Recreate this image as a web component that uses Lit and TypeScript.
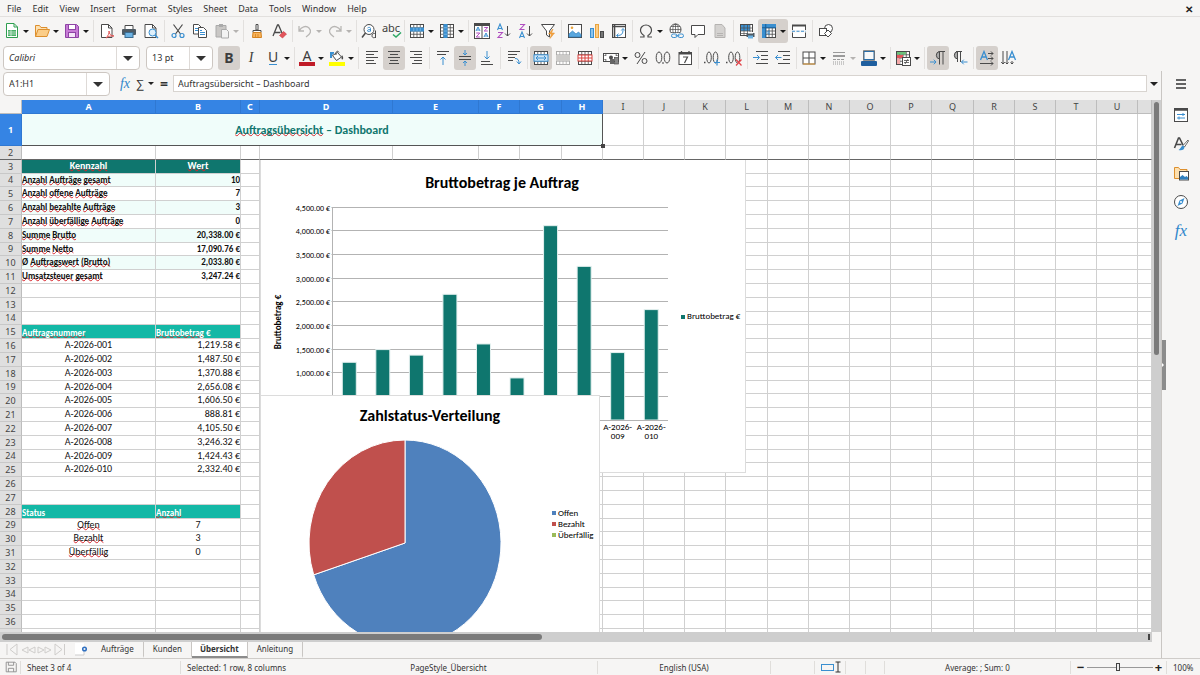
import { LitElement, html, svg, css, nothing, TemplateResult, SVGTemplateResult } from "lit";
import { customElement, property } from "lit/decorators.js";
import { classMap } from "lit/directives/class-map.js";

const K = "#4a4a4a";
const B = "#3a8fd0";
const G = "#9a9a9a";
const O = "#e8a33d";

const lines = (rows: [number, number, number][], color = K) =>
  svg`${rows.map(([x1, x2, y]) => svg`<path d="M${x1} ${y}H${x2}" stroke=${color}/>`)}`;

const grid = (color = K) => svg`
  <rect x="1.5" y="1.5" width="13" height="13" fill="#fff" stroke=${color}/>
  <path d="M1.5 4.75h13M1.5 8h13M1.5 11.25h13M4.75 1.5v13M8 1.5v13M11.25 1.5v13" stroke=${color} stroke-width=".8"/>`;

const icons: Record<string, SVGTemplateResult> = {
  new: svg`<path d="M2.500 .5h7.500l3.500 3.500V14.500H2.500z" fill="#fff" stroke="#2f9e4f"/><path d="M10 .5V4h3.500" stroke="#2f9e4f"/><rect x="4" y="7" width="8" height="6" fill="#49b067"/><path d="M4 9h8M4 11h8M7 7v6" stroke="#fff" stroke-width=".6"/>`,
  open: svg`<path d="M1.500 13.500V2.500h4l1.500 2h6v2" fill="#fde0b0" stroke="#dd8f2d"/><path d="M1.500 13.500L4 6.500h11.500l-2.500 7z" fill="#fbcd88" stroke="#dd8f2d"/>`,
  save: svg`<path d="M1.500 1.500h11l2 2v11h-13z" fill="#c77bd6" stroke="#8e44a5"/><rect x="4.500" y="1.500" width="7" height="5" fill="#fff" stroke="#8e44a5"/><rect x="4.500" y="9.500" width="7" height="5" fill="#f5e6f8" stroke="#8e44a5"/>`,
  pdf: svg`<path d="M2.500 1.500h7L13 5v9.500H2.500z" fill="#fff" stroke=${K}/><path d="M9.500 1.500V5H13" stroke=${K}/><path d="M7 15c2-2 3.500-5 3-7 0 3 2 5 5 5-3-.5-6 .5-8 2z" fill="#fff" stroke="#e05555"/>`,
  print: svg`<path d="M4 6V2.500h8V6" fill="#fff" stroke=${K}/><rect x="1" y="6" width="14" height="6" rx="1" fill="#4e5a63"/><rect x="4" y="9.500" width="8" height="5" fill="#6db3e4" stroke="#3b6c90"/>`,
  preview: svg`<path d="M2 1.500h7.500L13 5v9.500H2z" fill="#fff" stroke=${K}/><path d="M9.500 1.500V5H13" stroke=${K}/><circle cx="9.500" cy="9.500" r="3.500" fill="#dff0fb" stroke=${B}/><path d="M12 12l3 3" stroke=${B} stroke-width="1.500"/>`,
  cut: svg`<path d="M3.500 1.500l7 9.500M12.500 1.500l-7 9.500" stroke=${K} stroke-width="1.200"/><circle cx="4" cy="12.500" r="2" stroke=${B} stroke-width="1.200"/><circle cx="12" cy="12.500" r="2" stroke=${B} stroke-width="1.200"/>`,
  copy: svg`<path d="M1.500 1.500h5l3 3v6.500h-8z" fill="#fff" stroke=${K}/><path d="M3 5.500h4M3 7.500h4" stroke=${B}/><path d="M6.500 4.500h5l3 3v7h-8z" fill="#fff" stroke=${K}/><path d="M8 9.500h5M8 11.500h5M8 7.500h2" stroke=${B}/>`,
  paste: svg`<path d="M2 2.500h10V14H2z" fill="#c9c7c5" stroke="#aaa"/><rect x="5" y="1" width="4" height="3" fill="#aaa"/><path d="M7.500 6.500h5l2 2v6.500h-7z" fill="#f3f3f3" stroke="#aaa"/>`,
  clone: svg`<path d="M7 1.500h2V7H7z" fill="#fff" stroke=${K}/><path d="M4 7.500h8v2H4z" fill="#fff" stroke=${K}/><path d="M4 9.500h8l.5 5h-9z" fill="#f8b45c" stroke="#d58320"/><path d="M6.500 11v3.500M9 11v3.500" stroke="#d58320" stroke-width=".8"/>`,
  clear: svg`<path d="M2 13L6.500 2h1L11 10M3.500 9.500h6" stroke=${K} stroke-width="1.300"/><path d="M8.500 12.500l4-4 3 2.500-4 4z" fill="#e2545b" stroke="#c9353d" stroke-width=".6"/>`,
  undo: svg`<path d="M2 3v5h5M2.500 7.500C4 4 9 2 12 5s1.500 6-3 9" stroke="#b8b6b4" stroke-width="1.300"/>`,
  redo: svg`<path d="M14 3v5H9M13.500 7.500C12 4 7 2 4 5s-1.500 6 3 9" stroke="#b8b6b4" stroke-width="1.300"/>`,
  find: svg`<circle cx="8" cy="6.500" r="5" fill="#fff" stroke=${K}/><path d="M4.500 10L1 14.500" stroke=${K} stroke-width="1.500"/><path d="M6.500 5c1-1 3-.8 3 .5v3M9.500 6.500c-2 0-3 .3-3 1.300s2 1 3-.3" stroke=${B}/><path d="M14.500 7.500V15M14.500 11c-1-1-3.500-.8-3.500 1.700s2.500 2.300 3.500 1.300" stroke=${K}/>`,
  rowop: svg`${grid()}<rect x="1" y="4.500" width="14" height="4" fill=${B}/><path d="M4.750 4.500v4M8 4.500v4M11.250 4.500v4" stroke="#8cc4ec" stroke-width=".7"/>`,
  colop: svg`${grid()}<rect x="4.500" y="1" width="4" height="14" fill=${B}/><path d="M4.500 4.750h4M4.500 8h4M4.500 11.250h4" stroke="#8cc4ec" stroke-width=".7"/>`,
  sort: svg`<rect x=".5" y=".5" width="15" height="15" fill="#fff" stroke=${K}/><path d="M.5 2h15" stroke=${K} stroke-width="2"/><path d="M8 1v15" stroke=${K}/><path d="M2 8l2-4 2 4M2.800 7h2.400" stroke=${B}/><path d="M2.200 10h3.600l-3.600 4h3.600" stroke="#b04fc0"/><path d="M10.200 4.500h3.600l-3.600 3.500h3.600" stroke="#b04fc0"/><path d="M10 14l2-4 2 4M10.800 13h2.400" stroke=${B}/>`,
  asc: svg`<path d="M1.500 7L4 1l2.500 6M2.300 5.500h3.400" stroke=${B} stroke-width="1.100"/><path d="M2 9.500h4.500L2 14.500h4.500" stroke="#b04fc0" stroke-width="1.100"/><path d="M11.500 3v10M9 10.500l2.500 2.500 2.500-2.500" stroke=${K}/>`,
  desc: svg`<path d="M2 1.500h4.500L2 6.500h4.500" stroke="#b04fc0" stroke-width="1.100"/><path d="M1.500 15L4 9l2.500 6M2.300 13.500h3.400" stroke=${B} stroke-width="1.100"/><path d="M11.500 3v10M9 10.500l2.500 2.500 2.500-2.500" stroke=${K}/>`,
  filter: svg`<path d="M1.500 1.500h13L9.500 8v6l-3-2V8z" fill="#fff" stroke=${K}/><path d="M13 6l-4.500 5h3L10 15.500l4.500-5.500h-3z" fill="#f7a543" stroke="#e08a22" stroke-width=".5"/>`,
  image: svg`<rect x="1.500" y="1.500" width="13" height="13" fill="#fff" stroke=${K}/><path d="M2 14v-3l3.500-3L9 11l2.500-2L14 11.500V14z" fill="#5aa7de" stroke="#2f7fbf" stroke-width=".7"/><circle cx="5" cy="4.800" r="1.300" fill=${O}/>`,
  chart: svg`<rect x="1.500" y="5.500" width="3" height="9" fill="#8cc4ec" stroke=${B}/><rect x="6.500" y="1.500" width="3" height="13" fill="#fbcd88" stroke=${O}/><rect x="11.500" y="8.500" width="3" height="6" fill="#777" stroke=${K}/>`,
  pivot: svg`<rect x="1.500" y="1.500" width="13" height="13" fill="#fff" stroke=${K}/><path d="M1.500 3.500h13M3.500 1.500v13" stroke=${K} stroke-width="1.600"/><path d="M6 12.500c5 0 6-2 6-6M10.300 7.500L12 5.500l1.700 2M7.500 10.700l-2 1.800 2 1.700" stroke=${B}/>`,
  omega: svg`<path d="M2 14h4v-1.500C3.500 11 2.500 9 2.500 7a5.500 5 0 0 1 11 0c0 2-1 4-3.500 5.500V14h4" stroke=${K} stroke-width="1.200"/>`,
  link: svg`<circle cx="7.500" cy="6.500" r="5.500" fill="#fff" stroke=${K}/><path d="M2 6.500h11M7.500 1v11M3 3.500h9M3 9.500h9" stroke=${K} stroke-width=".7"/><ellipse cx="7.500" cy="6.500" rx="2.700" ry="5.500" stroke=${K} stroke-width=".7"/><rect x="3" y="10" width="13" height="5.500" fill="#f6f5f4"/><rect x="3.500" y="11" width="5.500" height="3.500" rx="1.700" stroke=${B}/><rect x="10" y="11" width="5.500" height="3.500" rx="1.700" stroke=${B}/><path d="M7.500 12.750h4" stroke=${B}/>`,
  comment: svg`<path d="M1.500 2.500h13v9H8L5 14.500v-3H1.500z" fill="#fff" stroke=${K}/>`,
  page: svg`<path d="M3 1.500h7L13 5v9.500H3z" fill="#d4d2d0" stroke="#b5b3b1"/><path d="M5 10.500h6M5 12.500h6" stroke="#b5b3b1"/>`,
  printarea: svg`<rect x="1.500" y="1.500" width="12" height="11" fill="#fff" stroke=${K}/><rect x="2" y="2" width="9" height="6" fill=${B}/><path d="M1.500 5h12M1.500 8h12M1.500 10.500h12M5 1.500v11M8.500 1.500v11M11 1.500v11" stroke=${K} stroke-width=".7"/><rect x="7.500" y="10" width="8" height="4" fill="#4e5a63"/><rect x="9" y="9" width="5" height="1.500" fill="#fff"/><rect x="9" y="12.500" width="5" height="3" fill="#6db3e4"/>`,
  freeze: svg`${grid()}<rect x="1" y="1" width="14" height="4" fill=${B}/><rect x="1" y="1" width="4" height="14" fill=${B}/><path d="M4.750 1v14M1 4.750h14" stroke="#1d5d93"/><path d="M8 7.500l-2 2 2 2M8 7.500v4" stroke=${B}/>`,
  split: svg`<path d="M1.500 7V2.500h13V7M1.500 9.500v5h13v-5" fill="#fff" stroke=${K}/><path d="M1 2.500h14" stroke=${K} stroke-width="2"/><path d="M1 8.250h14" stroke=${B} stroke-dasharray="3 1.500"/>`,
  shapes: svg`<circle cx="10.500" cy="5.500" r="4" fill="#fff" stroke=${K}/><rect x="1.500" y="5.500" width="7" height="7" fill="#fff" stroke=${K}/><path d="M10 7l3.500 3.500L10 14l-3.500-3.500z" fill="#fff" stroke=${K}/>`,
  left: lines([[2, 14, 1.5], [2, 10, 4.5], [2, 14, 7.5], [2, 10, 10.5], [2, 12, 13.5]]),
  center: lines([[2, 14, 1.5], [4, 12, 4.5], [2, 14, 7.5], [4, 12, 10.5], [3, 13, 13.5]]),
  right: lines([[2, 14, 1.5], [6, 14, 4.5], [2, 14, 7.5], [6, 14, 10.5], [4, 14, 13.5]]),
  top: svg`${lines([[2, 14, 1.5], [2, 11, 4.5]])}<path d="M8 15V7M5.500 9.500L8 7l2.500 2.500" stroke=${B}/>`,
  middle: svg`${lines([[2, 14, 6.5], [2, 14, 9.5]])}<path d="M8 0v5M6 3l2 2 2-2M8 16v-5M6 13l2-2 2 2" stroke=${B}/>`,
  bottom: svg`${lines([[2, 11, 11.5], [2, 14, 14.5]])}<path d="M8 1v8M5.500 6.500L8 9l2.500-2.500" stroke=${B}/>`,
  wrap: svg`${lines([[2, 14, 1.5], [2, 11, 4.5], [2, 9, 7.5], [2, 7, 10.5]])}<path d="M9 8.500c3 0 4 1.500 4 5M10.800 11.500L13 14l2-2.500" stroke=${B}/>`,
  merge: svg`${grid()}<rect x="1" y="4.800" width="14" height="6.400" fill="#cfe6f7" stroke=${B}/><path d="M3 8h10M5 6L3 8l2 2M11 6l2 2-2 2" stroke=${B}/>`,
  mergeoff: svg`<g opacity=".8">${grid(G)}<rect x="1" y="5" width="14" height="6" fill="#c4c2c0"/></g>`,
  unmerge: svg`${grid()}<rect x="1" y="5" width="14" height="6" fill="#fff" stroke="#d9433f"/><path d="M4.750 5v6M8 5v6M11.250 5v6M1 8h14" stroke="#d9433f"/>`,
  currency: svg`<rect x=".5" y="3.500" width="15" height="8" fill="#fff" stroke=${K}/><path d="M2 6V5h1.500M2 9v1h1.500M14 6V5h-1.500" stroke=${K}/><circle cx="8" cy="7.500" r="2" fill=${K}/><rect x="7" y="9" width="4" height="5" fill="#666"/><rect x="11.500" y="7.500" width="4" height="6.500" fill="#888" stroke=${K} stroke-width=".7"/>`,
  date: svg`<rect x="2" y="2.500" width="12.500" height="12" fill="#fff" stroke=${K}/><path d="M2 3.500h12.500" stroke=${K} stroke-width="2"/><path d="M4.500 1v2M12 1v2" stroke=${K} stroke-width="1.300"/><path d="M6 7h4.500L7.500 13" stroke=${K} stroke-width="1.200"/>`,
  adddec: svg`<ellipse cx="5" cy="7.500" rx="2.300" ry="5.500" stroke=${K}/><ellipse cx="11.500" cy="7.500" rx="2.300" ry="5.500" stroke=${K}/><path d="M0 12.500h1.500" stroke=${K} stroke-width="1.500"/><path d="M13 9.500v6M10 12.500h6" stroke=${B} stroke-width="1.200"/>`,
  deldec: svg`<ellipse cx="5" cy="7.500" rx="2.300" ry="5.500" stroke=${K}/><ellipse cx="11.500" cy="7.500" rx="2.300" ry="5.500" stroke=${K}/><path d="M0 12.500h1.500" stroke=${K} stroke-width="1.500"/><path d="M10 9.500l5.500 6M15.500 9.500l-5.500 6" stroke="#e2454b" stroke-width="1.200"/>`,
  number: svg`<ellipse cx="4" cy="7.500" rx="2.800" ry="5.500" stroke=${K}/><ellipse cx="12" cy="7.500" rx="2.800" ry="5.500" stroke=${K}/><path d="M7.300 13h1.400" stroke=${K} stroke-width="1.500"/>`,
  percent: svg`<circle cx="4.500" cy="5" r="2.500" stroke=${K}/><circle cx="11.500" cy="11" r="2.500" stroke=${K}/><path d="M12 2L4 14" stroke=${K}/>`,
  indent: svg`${lines([[3, 15, 1.5], [8, 15, 5.5], [8, 15, 9.5], [3, 15, 13.5]])}<path d="M0 7.500h6M4 5l2.500 2.500L4 10" stroke=${B}/>`,
  outdent: svg`${lines([[3, 15, 1.5], [8, 15, 5.5], [8, 15, 9.5], [3, 15, 13.5]])}<path d="M.5 7.500H6.500M3 5L.5 7.500 3 10" stroke=${B}/>`,
  borders: svg`<rect x="2" y="2" width="12" height="12" fill="#fff" stroke=${K}/><path d="M8 2v12M2 8h12" stroke=${K}/><path d="M2 14h12" stroke=${O}/>`,
  bstyle: svg`<path d="M2 2.500h12" stroke=${G} stroke-width="1"/><path d="M2 6h12" stroke=${G} stroke-width="2"/><path d="M2 9.500h12" stroke=${G} stroke-dasharray="3 1"/><path d="M2 12h12M2 14h12" stroke=${G} stroke-dasharray="1 1"/>`,
  bcolor: svg`<rect x="3" y="1.500" width="10" height="8" fill="#f8f8f8" stroke="#2a6ea8"/><path d="M2.500 .5h11v10h-11z" stroke=${K} stroke-width=".6"/><rect x="0" y="11" width="16" height="5" rx="1" fill="#1f5f9f"/>`,
  cond: svg`${grid()}<rect x="2" y="2" width="9" height="2.500" fill="#6cc17a"/><rect x="2" y="5" width="6" height="3" fill="#e2545b"/><rect x="2" y="8.500" width="3" height="5.500" fill="#f5a9a9"/><rect x="7.500" y="7.500" width="8" height="8" fill="#fff" stroke=${K}/><path d="M9 10.500h5M9 12.500h5M13 9l-3 5" stroke=${K} stroke-width=".8"/>`,
  ltr: svg`<path d="M13 1.500V14.500M9.500 1.500V14.500M15 1.500H8.500" stroke=${K}/><path d="M9.500 1.500a3.800 3.800 0 0 0 0 7.500z" fill="#aaa" stroke=${K}/><path d="M0 12h6M3.800 9.700L6 12l-2.200 2.300" stroke=${B}/>`,
  rtl: svg`<path d="M8.500 1.500V12M5.500 1.500V12M10 1.500H4" stroke=${K}/><path d="M5.500 1.500a3.800 3.800 0 0 0 0 7.500z" fill="#aaa" stroke=${K}/><path d="M15.500 12h-6M11.700 9.700L9.500 12l2.200 2.300" stroke=${B}/>`,
  tdir: svg`<path d="M1.500 10L5 1.500 8.500 10M2.700 7h4.600" stroke=${B} stroke-width="1.300"/><path d="M9 3.500h5M12 1.500l2 2-2 2M9 8.500h5M12 6.500l2 2-2 2M1 13.500h13M12 11.500l2 2-2 2" stroke=${K}/>`,
  tvert: svg`<path d="M7.500 10L11 1.500 14.500 10M8.700 7h4.600" stroke=${B} stroke-width="1.300"/><path d="M2 1v13M.2 12L2 14l1.800-2M6 1v13M4.500 12.500L6 14l1.500-1.500M11 11v3M9.500 12.500L11 14l1.500-1.500" stroke=${K}/>`,
  menu: svg`<path d="M3 4h10M3 8h10M3 12h10" stroke="#333" stroke-width="1.600"/>`,
  props: svg`<rect x="1.500" y="1.500" width="13" height="13" fill="#fff" stroke=${K}/><path d="M1 2.500h14" stroke=${K} stroke-width="2.500"/><path d="M4 7.500h8M10 6v3M4 11h8M6 9.500v3" stroke=${B}/>`,
  styles: svg`<path d="M1.500 12L5.500 2h1L10 9M3 8.500h5.500" stroke=${K} stroke-width="1.600"/><path d="M15 4l-5 5.500 1.500 1.500L15.500 5z" fill="#fff" stroke=${K} stroke-width=".8"/><path d="M10 9.500c-2 .5-2 3-4.500 4.500 3.500 1 6-.5 6-3z" fill=${B}/>`,
  gallery: svg`<path d="M1.500 13.500V2.500h4l1.500 2h7v9z" fill="#fde0b0" stroke="#dd8f2d"/><rect x="6.500" y="6.500" width="9" height="8.500" fill="#fff" stroke=${K}/><path d="M7 14.500v-2.500l2.500-2 2.500 2 1.500-1L15 12.500v2z" fill="#2f7fbf"/>`,
  navigator: svg`<circle cx="8" cy="8" r="6.500" fill="#fff" stroke=${K}/><path d="M11.500 4L9.500 9.500 4.500 12l2-5.500z" fill=${B}/><circle cx="8" cy="8" r="1" fill="#fff"/>`,
  floppy: svg`<path d="M2.500 2.500h10l1.500 1.500v9.500H2.500z" stroke="#8a8a8a"/><path d="M5 2.500v3.500h6V2.500M5 13.500V9.500h6v4" stroke="#8a8a8a"/>`,
  bucket: svg`<path d="M3.500 5.500l5-3 4 4.500-5 3.500z" fill="#fff" stroke=${K}/><path d="M7 5c-1-3.500 2-5 3-2.500" stroke=${K}/><path d="M13 5c1.500 2 1.500 4 .5 4.500s-1.500-2-.5-4.500z" fill=${K}/><path d="M1 2h4v1.500L3 5v3H1z" fill="#3a8fd0"/><rect x="0" y="12" width="16" height="4" fill="#ffff00"/>`,
};

@customElement("ui-icon")
export class UiIcon extends LitElement {
  static styles = css`
    :host { display: block; width: 16px; height: 16px; }
    svg { display: block; width: 100%; height: 100%; }
  `;
  @property() name = "";
  render() {
    return html`<svg viewBox="0 0 16 16" fill="none" aria-hidden="true">${icons[this.name]}</svg>`;
  }
}

interface Tool {
  icon?: string;
  glyph?: string;
  kind?: string;
  label: string;
  drop?: boolean;
  on?: boolean;
  dim?: boolean;
}
type Item = Tool | "|" | "!";

const t = (icon: string, label: string, extra: Partial<Tool> = {}): Tool => ({ icon, label, ...extra });

const standard: Item[] = [
  t("new", "New", { drop: true }), t("open", "Open", { drop: true }), t("save", "Save", { drop: true }), "|",
  t("pdf", "Export as PDF"), t("print", "Print"), t("preview", "Print preview"), "|",
  t("cut", "Cut"), t("copy", "Copy"), t("paste", "Paste", { drop: true, dim: true }), "|",
  t("clone", "Clone formatting"), t("clear", "Clear formatting"), "!",
  t("undo", "Undo", { drop: true, dim: true }), t("redo", "Redo", { drop: true, dim: true }), "!",
  t("find", "Find and replace"), { glyph: "abc", kind: "spell", label: "Spelling" }, "!",
  t("rowop", "Row", { drop: true }), t("colop", "Column", { drop: true }), "|",
  t("sort", "Sort"), t("asc", "Sort ascending"), t("desc", "Sort descending"), t("filter", "AutoFilter"), "|",
  t("image", "Insert image"), t("chart", "Insert chart"), t("pivot", "Pivot table"), "|",
  t("omega", "Special character", { drop: true }), t("link", "Hyperlink"), t("comment", "Comment"), t("page", "Headers and footers"), "|",
  t("printarea", "Print area"), t("freeze", "Freeze rows and columns", { drop: true, on: true }), t("split", "Split window"), "|",
  t("shapes", "Draw functions"),
];

const formatting: Item[] = [
  { glyph: "B", kind: "bold", label: "Bold", on: true }, { glyph: "I", kind: "italic", label: "Italic" },
  { glyph: "U", kind: "under", label: "Underline", drop: true }, "!",
  { glyph: "A", kind: "fontcolor", label: "Font color", drop: true }, t("bucket", "Background color", { drop: true }), "|",
  t("left", "Align left"), t("center", "Center horizontally", { on: true }), t("right", "Align right"), "|",
  t("top", "Align top"), t("middle", "Center vertically", { on: true }), t("bottom", "Align bottom"), "|",
  t("wrap", "Wrap text"), "|",
  t("merge", "Merge and center", { on: true }), t("mergeoff", "Merge cells"), t("unmerge", "Split cells"), "!",
  t("currency", "Currency", { drop: true }), t("percent", "Percent"), t("number", "Number"), t("date", "Date"), "|",
  t("adddec", "Add decimal place"), t("deldec", "Delete decimal place"), "|",
  t("indent", "Increase indent"), t("outdent", "Decrease indent"), "!",
  t("borders", "Borders", { drop: true }), t("bstyle", "Border style", { drop: true, dim: true }), t("bcolor", "Border color", { drop: true }), "!",
  t("cond", "Conditional formatting", { drop: true }), "|",
  t("ltr", "Left to right", { on: true }), t("rtl", "Right to left"), "|",
  t("tdir", "Text horizontal", { on: true }), t("tvert", "Text vertical"),
];

@customElement("tool-strip")
export class ToolStrip extends LitElement {
  static styles = css`
    :host { display: flex; align-items: center; }
    .tool {
      display: flex; align-items: center; height: 24px; padding: 0; border: 0; border-radius: 3px;
      background: none; font: 14px "Noto Sans", sans-serif; color: #3d3d3d;
    }
    .on { background: #d5d0cc; }
    .face { display: flex; flex-direction: column; align-items: center; justify-content: center; width: 22px; height: 22px; line-height: 14px; }
    .drop::after {
      content: ""; width: 0; margin: 2px 2px 0 0;
      border: 3px solid transparent; border-top-color: #1a1a1a; border-bottom: 0;
    }
    .dim::after { border-top-color: #b5b3b1; }
    .sep { width: 1px; height: 22px; margin: 0 2px; background: #e2e0de; }
    .tight { margin-right: 1px; }
    .bold { font-weight: 700; }
    .italic { font-style: italic; font-family: "Liberation Serif", serif; }
    .under .bar { width: 8px; height: 1px; background: #3a8fd0; }
    .fontcolor .face { line-height: 12px; }
    .fontcolor .bar { width: 16px; height: 4px; background: #c01c28; }
    .spell { font-size: 11px; }
    .spell .face { line-height: 9px; }
    .tick { display: block; width: 10px; height: 6px; align-self: flex-end; }
  `;
  @property({ attribute: false }) items: Item[] = [];
  render() {
    return this.items.map((item) => {
      if (item === "|" || item === "!") {
        return html`<span class=${classMap({ sep: true, tight: item === "!" })}></span>`;
      }
      const cls = { tool: true, on: !!item.on, drop: !!item.drop, dim: !!item.dim, [item.kind ?? "plain"]: true };
      return html`<button class=${classMap(cls)} aria-label=${item.label}>
        <span class="face">${item.icon
          ? html`<ui-icon name=${item.icon}></ui-icon>`
          : html`${item.glyph}${item.kind === "under" || item.kind === "fontcolor" ? html`<span class="bar"></span>` : nothing}
            ${item.kind === "spell" ? html`<svg class="tick" viewBox="0 0 10 6" fill="none"><path d="M1 2.500l3 2.500L9 .5" stroke="#2fa866" stroke-width="1.500"/></svg>` : nothing}`}
        </span>
      </button>`;
    });
  }
}

interface Order { id: string; value: number; }
const orders: Order[] = [1219.58, 1487.5, 1370.88, 2656.08, 1606.5, 888.81, 4105.5, 3246.32, 1424.43, 2332.4]
  .map((value, i) => ({ id: `A-2026-${String(i + 1).padStart(3, "0")}`, value }));
const euro = (n: number) =>
  `${n.toLocaleString("en-US", { minimumFractionDigits: 2, maximumFractionDigits: 2 })} €`;

const chartText = css`
  svg { display: block; background: #fff; }
  text { font-family: Carlito, Lato, sans-serif; font-size: 9px; fill: #000; }
  .title { font-size: 16px; font-weight: 700; text-anchor: middle; }
  .axis { font-weight: 700; text-anchor: middle; }
  .end { text-anchor: end; font-size: 8px; }
  .mid { text-anchor: middle; }
  .frame { fill: #fff; stroke: #dcdcdc; }
`;

@customElement("bar-chart")
export class BarChart extends LitElement {
  static styles = [chartText, css`
    :host { display: block; }
    .grid { stroke: #b3b3b3; }
    .bar { fill: #0f766e; stroke: #e4f0ef; }
    .key { fill: #0f766e; }
  `];
  render() {
    const base = 260.5, top = 47.5, left = 72.5, right = 408;
    const y = (v: number) => base - (v / 4500) * (base - top);
    const step = (right - left) / orders.length;
    const ticks = Array.from({ length: 9 }, (_, i) => (i + 1) * 500);
    return html`<svg width="486" height="313" viewBox="0 0 486 313" role="img" aria-label="Bruttobetrag je Auftrag">
      <rect class="frame" x=".5" y="-.5" width="485" height="313"/>
      <text class="title" x="242" y="28">Bruttobetrag je Auftrag</text>
      ${ticks.map((v) => svg`<path class="grid" d="M${left - 1} ${Math.round(y(v)) - 0.5}H${right}"/>
        <text class="end" x="70" y=${Math.round(y(v)) + 3}>${euro(v)}</text>`)}
      <path class="grid" d="M${left} ${top}V${base}"/>
      <text class="axis" transform="translate(21 162) rotate(-90)">Bruttobetrag €</text>
      ${orders.map((o, i) => {
        const c = left + step * (i + 0.5);
        return svg`<rect class="bar" x=${c - 7} y=${y(o.value) - 0.5} width="14" height=${base - y(o.value)}/>
          ${i > 7 ? svg`<text class="mid" x=${c} y="270">${o.id.slice(0, 7)}</text><text class="mid" x=${c} y="279">${o.id.slice(7)}</text>` : nothing}`;
      })}
      <path class="grid" d="M${left} ${base}H${right}"/>
      <rect class="key" x="421" y="155" width="4" height="4"/>
      <text x="427" y="159">Bruttobetrag €</text>
    </svg>`;
  }
}

@customElement("pie-chart")
export class PieChart extends LitElement {
  static styles = [chartText, css`
    :host { display: block; }
    .slice { stroke: #fff; }
  `];
  render() {
    const data = [
      { name: "Offen", n: 7, color: "#4f81bd" },
      { name: "Bezahlt", n: 3, color: "#c0504d" },
      { name: "Überfällig", n: 0, color: "#9bbb59" },
    ];
    const cx = 145, cy = 148, rx = 96, ry = 103;
    let at = 0;
    const pt = (f: number) => `${cx + rx * Math.sin(f * 2 * Math.PI)} ${cy - ry * Math.cos(f * 2 * Math.PI)}`;
    return html`<svg width="340" height="262" viewBox="0 0 340 262" role="img" aria-label="Zahlstatus-Verteilung">
      <rect class="frame" x=".5" y=".5" width="339" height="261"/>
      <text class="title" x="170" y="26">Zahlstatus-Verteilung</text>
      ${data.map((d) => {
        if (!d.n) return nothing;
        const a = at, b = (at += d.n / 10);
        return svg`<path class="slice" fill=${d.color} d="M${cx} ${cy}L${pt(a)}A${rx} ${ry} 0 ${b - a > 0.5 ? 1 : 0} 1 ${pt(b)}Z"/>`;
      })}
      ${data.map((d, i) => svg`<rect x="292" y=${116 + i * 11} width="4" height="4" fill=${d.color}/>
        <text x="298" y=${121 + i * 11}>${d.name}</text>`)}
    </svg>`;
  }
}

interface Cell { text: string; cls: string; spell?: number; }
const cells: Record<string, Cell> = {};
const put = (ref: string, text: string, cls: string, spell = 0) => { cells[ref] = { text, cls, spell }; };

put("A3", "Kennzahl", "head center", 1);
put("B3", "Wert", "head center", 1);
([
  ["Anzahl Aufträge gesamt", "10"], ["Anzahl offene Aufträge", "7"], ["Anzahl bezahlte Aufträge", "3"],
  ["Anzahl überfällige Aufträge", "0"], ["Summe Brutto", "20,338.00 €"], ["Summe Netto", "17,090.76 €"],
  ["Ø Auftragswert (Brutto)", "2,033.80 €"], ["Umsatzsteuer gesamt", "3,247.24 €"],
] as [string, string][]).forEach(([k, v], i) => {
  const band = i % 2 === 0 ? " band" : "";
  put(`A${i + 4}`, k, `strong${band}`, 9);
  put(`B${i + 4}`, v, `strong end${band}`);
});
put("A15", "Auftragsnummer", "teal", 1);
put("B15", "Bruttobetrag €", "teal", 1);
orders.forEach((o, i) => {
  put(`A${i + 16}`, o.id, "center");
  put(`B${i + 16}`, euro(o.value), "end");
});
put("A28", "Status", "teal");
put("B28", "Anzahl", "teal", 1);
([["Offen", "7"], ["Bezahlt", "3"], ["Überfällig", "0"]] as [string, string][]).forEach(([k, v], i) => {
  put(`A${i + 29}`, k, "center", 1);
  put(`B${i + 29}`, v, "center");
});

const columns = "ABCDEFGHIJKLMNOPQRSTU".split("");
const rows = Array.from({ length: 36 }, (_, i) => i + 2);

@customElement("sheet-grid")
export class SheetGrid extends LitElement {
  static styles = css`
    :host { display: block; position: relative; overflow: hidden; background: #fff; contain: size; }
    .sheet { width: 100%; table-layout: fixed; border-collapse: separate; border-spacing: 0; font: 10px/12px Carlito, Lato, sans-serif; color: #111; }
    .c-head { width: 22px; }
    .c-D { width: 133px; }
    .c-A { width: 134px; }
    .c-B { width: 85px; }
    .c-C { width: 19px; }
    .c-E { width: 86px; }
    .c-F, .c-H, .c-I, .c-J, .c-K, .c-M, .c-N, .c-O, .c-P, .c-R, .c-S, .c-T, .c-U { width: 41px; }
    .c-G, .c-L, .c-Q { width: 42px; }
    th, td { box-sizing: border-box; height: 14px; padding: 0; overflow: hidden; white-space: nowrap; vertical-align: top; border: solid #d0d0d0; border-width: 0 1px 1px 0; }
    .row:nth-child(5n + 4) > * { height: 13px; }
    .colhead, .rowhead, .corner { font: 9px/12px "Noto Sans", sans-serif; vertical-align: middle; color: #444; background: #dfdfdf; border-color: #bdbdbd; text-align: center; }
    .rowhead { border-bottom-color: #c8c8c8; }
    .corner { background: #f6f5f4; }
    .sel { background: #3584e4; color: #fff; font-weight: 700; border-color: #2f78d2; }
    .first > * { height: 32px; }
    .title { text-align: center; vertical-align: middle; background: #f0fdfa; color: #0f766e; font-size: 12px; font-weight: 700; border-color: #555; }
    .frozen > * { border-bottom-color: #666; }
    .text { display: block; height: 12px; }
    .center { text-align: center; }
    .end { text-align: right; }
    .strong, .head, .teal { font-weight: 700; }
    .strong, .teal { font-size: 9px; }
    .head { background: #0f766e; color: #fff; }
    .teal { background: #14b8a6; color: #fff; line-height: 16px; }
    .band { background: #f0fdfa; }
    .spell { text-decoration: underline wavy #d8262c 1px; text-decoration-skip-ink: none; text-underline-offset: -2px; }
    .handle { position: absolute; left: 601px; top: 44px; width: 4px; height: 4px; background: #444; }
    .float { position: absolute; left: 260px; }
    .bars { top: 60px; }
    .pie { top: 295px; }
  `;
  private content(c?: Cell) {
    if (!c) return nothing;
    const words = c.text.split(" ");
    return html`<span class="text">${words.map((w, i) =>
      html`${i ? " " : ""}${i < (c.spell ?? 0) && w.length > 1 ? html`<span class="spell">${w}</span>` : w}`)}</span>`;
  }
  render(): TemplateResult {
    return html`
      <table class="sheet">
        <colgroup><col class="c-head">${columns.map((c) => html`<col class="c-${c}">`)}<col></colgroup>
        <thead><tr>
          <th class="corner"></th>
          ${columns.map((c, i) => html`<th scope="col" class=${classMap({ colhead: true, sel: i < 8 })}>${c}</th>`)}
          <th class="colhead"></th>
        </tr></thead>
        <tbody>
          <tr class="first">
            <th scope="row" class="rowhead sel">1</th>
            <td class="title" colspan="8"><span class="spell">Auftragsübersicht</span> – Dashboard</td>
            ${columns.slice(8).map(() => html`<td></td>`)}<td></td>
          </tr>
          ${rows.map((r) => html`<tr class=${r === 2 ? "row frozen" : "row"}>
            <th scope="row" class="rowhead">${r}</th>
            ${columns.map((c) => {
              const cell = cells[c + r];
              return html`<td class=${cell?.cls ?? ""}>${this.content(cell)}</td>`;
            })}<td></td>
          </tr>`)}
        </tbody>
      </table>
      <span class="handle"></span>
      <bar-chart class="float bars"></bar-chart>
      <pie-chart class="float pie"></pie-chart>`;
  }
}

@customElement("app-root")
export class AppRoot extends LitElement {
  static styles = css`
    :host { display: flex; flex-direction: column; height: 100vh; overflow: hidden; background: #f6f5f4; color: #333; font: 9px/12px "Noto Sans", sans-serif; }
    button, input, select { font: inherit; color: inherit; }
    button { padding: 0; border: 0; background: none; }
    .menubar { display: flex; align-items: center; height: 15px; padding: 1px 6px 0 7px; border-bottom: 1px solid #e2e0de; }
    .menus { display: flex; flex: 1; gap: 11px; }
    .close { font-size: 10px; font-weight: 700; color: #222; width: 10px; }
    .bar { display: flex; align-items: center; height: 27px; padding-left: 1px; }
    .fmt { padding-left: 3px; }
    .combo { display: flex; position: relative; box-sizing: border-box; height: 24px; border: 1px solid #cdc7c2; border-radius: 4px; background: #fff; }
    .combo select, .combo input { flex: 1; min-width: 0; width: 100%; box-sizing: border-box; appearance: none; border: 0; outline: 0; background: none; padding: 0 0 0 5px; }
    .combo::after { content: ""; width: 0; margin: 9px 6px 0; border: 5px solid transparent; border-top-color: #333; border-bottom: 0; }
    .combo::before { content: ""; position: absolute; top: 0; bottom: 0; right: 22px; width: 1px; background: #dedad7; }
    .font { width: 137px; margin-right: 6px; font-style: italic; }
    .size { width: 67px; margin-right: 5px; }
    .ref { width: 107px; margin-right: 8px; }
    .main { display: flex; flex: 1; min-height: 0; }
    .work { display: flex; flex-direction: column; flex: 1; min-width: 0; border-right: 1px solid #c9c6c3; }
    .formula { display: flex; align-items: center; height: 29px; padding: 0 0 4px 3px; box-sizing: border-box; }
    .fx { font: italic 14px/16px "Liberation Serif", serif; color: #2f86cb; width: 14px; }
    .sigma { font: 12px/16px "Noto Sans", sans-serif; width: 16px; }
    .tri { width: 0; border: 3px solid transparent; border-top-color: #222; border-bottom: 0; }
    .eq { font: 700 14px/16px "Noto Sans", sans-serif; width: 12px; margin: 0 3px 0 4px; }
    .line { flex: 1; min-width: 0; height: 17px; box-sizing: border-box; border: 1px solid #d8d4d0; background: #fff; padding: 0 4px; outline: 0; }
    .expand { display: flex; justify-content: center; width: 14px; }
    .expand::after { content: ""; border: 4px solid transparent; border-top-color: #222; border-bottom: 0; }
    .view { display: flex; flex: 1; min-height: 0; }
    .view sheet-grid { flex: 1; min-width: 0; }
    .vscroll { width: 9px; background: #cecece; padding: 2px; box-sizing: border-box; }
    .vthumb { height: 48%; border-radius: 3px; background: #7a7a7a; }
    .hscroll { display: flex; height: 10px; box-sizing: border-box; margin-right: 9px; padding: 2px; background: #cecece; justify-content: space-between; }
    .hthumb { width: 47%; border-radius: 3px; background: #7a7a7a; }
    .hend { width: 2px; background: #444; }
    .tabs { display: flex; height: 16px; align-items: stretch; padding-left: 6px; font-size: 8px; }
    .nav { display: flex; width: 60px; }
    .nav svg { width: 60px; height: 16px; }
    .add { display: flex; width: 18px; margin-left: 8px; }
    .tab { padding: 0 9px; border-right: 1px solid #c9c6c3; line-height: 14px; border-bottom: 2px solid transparent; }
    .current { background: #fff; font-weight: 700; padding: 0 8px; border-bottom-color: #8c8c8c; }
    .side { width: 38px; display: flex; flex-direction: column; align-items: center; position: relative; padding-top: 5px; gap: 13px; }
    .side button:first-child { margin-bottom: 2px; }
    .grip { position: absolute; left: 0; top: 50%; margin-top: -25px; width: 4px; height: 50px; background: #8c8c8c; display: flex; align-items: center; }
    .grip::after { content: ""; border: 2px solid transparent; border-left-color: #fff; border-right: 0; }
    .sidefx { font: italic 17px/16px "Liberation Serif", serif; color: #2f86cb; }
    .status { display: grid; grid-template-columns: 21px 160px 119px minmax(0, 1fr) 173px 44px 31px 20px 19px 186px 96px 33px; align-items: center; height: 16px; border-top: 1px solid #cfccc9; font-size: 8px; line-height: 13px; }
    .status > * { height: 13px; box-sizing: border-box; border-right: 1px solid #e0dedb; white-space: nowrap; }
    .status > .open { border-right: 0; }
    .pad { padding-left: 6px; }
    .mid { text-align: center; }
    .disk { padding-left: 4px; display: flex; align-items: center; }
    .disk ui-icon { width: 14px; height: 14px; }
    .mode { display: flex; align-items: center; gap: 3px; padding-left: 6px; }
    .zoom { display: flex; align-items: center; justify-content: space-between; padding: 0 3px 0 5px; }
    .zoom button { font-size: 13px; font-weight: 700; width: 9px; color: #222; }
    .range { appearance: none; width: 66px; height: 9px; margin: 0; background: linear-gradient(#999, #999) center / 100% 1px no-repeat; }
    .range::-webkit-slider-thumb { appearance: none; width: 4px; height: 8px; border: 1px solid #444; background: #eee; box-sizing: border-box; }
  `;
  render() {
    const menus = ["File", "Edit", "View", "Insert", "Format", "Styles", "Sheet", "Data", "Tools", "Window", "Help"];
    const sheets = ["Aufträge", "Kunden", "Übersicht", "Anleitung"];
    return html`
      <nav class="menubar">
        <div class="menus">${menus.map((m) => html`<button>${m}</button>`)}</div>
        <button class="close" aria-label="Close document">✕</button>
      </nav>
      <div class="bar"><tool-strip .items=${standard}></tool-strip></div>
      <div class="bar fmt">
        <label class="combo font"><select aria-label="Font name"><option>Calibri</option></select></label>
        <label class="combo size"><select aria-label="Font size"><option>13 pt</option></select></label>
        <tool-strip .items=${formatting}></tool-strip>
      </div>
      <div class="main">
        <div class="work">
          <div class="formula">
            <label class="combo ref"><input aria-label="Name box" value="A1:H1"></label>
            <button class="fx" aria-label="Function wizard">fx</button>
            <button class="sigma" aria-label="Select function">∑</button>
            <span class="tri"></span>
            <button class="eq" aria-label="Formula">=</button>
            <input class="line" aria-label="Input line" value="Auftragsübersicht – Dashboard">
            <button class="expand" aria-label="Expand formula bar"></button>
          </div>
          <div class="view">
            <sheet-grid></sheet-grid>
            <div class="vscroll"><div class="vthumb"></div></div>
          </div>
          <div class="hscroll"><div class="hthumb"></div><div class="hend"></div></div>
          <div class="tabs">
            <button class="nav" aria-label="Scroll sheets"><svg viewBox="0 0 60 16" fill="none" stroke="#cfcdcb">
              <path d="M1 2v11M11 2L4 7.500l7 5.500zM22 5l-6 3 6 3zM29 5l-6 3 6 3zM32 5l6 3-6 3zM39 5l6 3-6 3zM49 2l7 5.500-7 5.500zM58.500 2v11"/></svg></button>
            <button class="add" aria-label="Add sheet"><svg width="16" height="15" viewBox="0 0 16 15" fill="none">
              <path d="M1 1h9v12H1z" fill="#fff"/><path d="M10 9v4H1" stroke="#ccc"/><circle cx="10.500" cy="7" r="1.800" stroke="#2f6fc0" stroke-width="1.500"/></svg></button>
            ${sheets.map((s) => html`<button class=${classMap({ tab: true, current: s === "Übersicht" })}>${s}</button>`)}
          </div>
        </div>
        <aside class="side">
          <button aria-label="Sidebar settings"><ui-icon name="menu"></ui-icon></button>
          <button aria-label="Properties"><ui-icon name="props"></ui-icon></button>
          <button aria-label="Styles"><ui-icon name="styles"></ui-icon></button>
          <button aria-label="Gallery"><ui-icon name="gallery"></ui-icon></button>
          <button aria-label="Navigator"><ui-icon name="navigator"></ui-icon></button>
          <button class="sidefx" aria-label="Functions">fx</button>
          <span class="grip"></span>
        </aside>
      </div>
      <footer class="status">
        <span class="disk"><ui-icon name="floppy"></ui-icon></span>
        <span class="pad">Sheet 3 of 4</span>
        <span class="pad open">Selected: 1 row, 8 columns</span>
        <span class="mid">PageStyle_Übersicht</span>
        <span class="mid">English (USA)</span>
        <span></span>
        <span class="mode"><svg width="22" height="12" viewBox="0 0 22 12" fill="none"><rect x=".5" y="3.500" width="12" height="6" stroke="#3a8fd0"/><path d="M14.500 1h5M17 1v10M14.500 11h5" stroke="#333"/></svg></span>
        <span></span>
        <span></span>
        <span class="mid">Average: ; Sum: 0</span>
        <span class="zoom"><button aria-label="Zoom out">−</button><input class="range" type="range" aria-label="Zoom" min="0" max="100" value="48"><button aria-label="Zoom in">+</button></span>
        <span class="pad open">100%</span>
      </footer>`;
  }
}
